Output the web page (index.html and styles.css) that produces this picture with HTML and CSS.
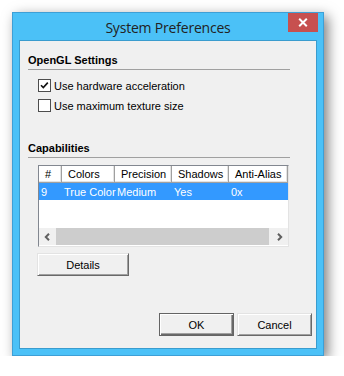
FILE: index.html
```html
<!DOCTYPE html>
<html>
<head>
<meta charset="utf-8">
<link rel="stylesheet" href="styles.css">
</head>
<body>
<div class="window">
  <div class="titlebar">
    <span class="spacer"></span>
    <div class="title">System Preferences</div>
    <div class="close">
      <svg width="10" height="9" viewBox="0 0 10 9"><path d="M1.2 0.8 L8.8 8.2 M8.8 0.8 L1.2 8.2" stroke="#fff" stroke-width="2" fill="none"/></svg>
    </div>
  </div>
  <div class="client">
    <div class="group-title">OpenGL Settings</div>
    <div class="checks">
      <label class="check"><span class="box"><svg width="11" height="11" viewBox="0 0 11 11"><path d="M2 5.2 L4.3 7.6 L8.8 2.6" stroke="#111" stroke-width="1.6" fill="none"/></svg></span>Use hardware acceleration</label>
      <label class="check"><span class="box"></span>Use maximum texture size</label>
    </div>
    <div class="group-title caps">Capabilities</div>
    <div class="listview">
      <div class="lv-header">
        <div class="hc c1">#</div>
        <div class="hc c2">Colors</div>
        <div class="hc c3">Precision</div>
        <div class="hc c4">Shadows</div>
        <div class="hc c5">Anti-Alias</div>
      </div>
      <div class="lv-row selected">
        <div class="rc c1">9</div>
        <div class="rc c2">True Color</div>
        <div class="rc c3">Medium</div>
        <div class="rc c4">Yes</div>
        <div class="rc c5">0x</div>
      </div>
      <div class="lv-empty"></div>
      <div class="hscroll">
        <div class="arrow"><svg width="7" height="8" viewBox="0 0 7 8"><path d="M5 0.8 L1.8 4 L5 7.2" stroke="#606060" stroke-width="2" fill="none"/></svg></div>
        <div class="thumb"></div>
        <div class="arrow"><svg width="7" height="8" viewBox="0 0 7 8"><path d="M2 0.8 L5.2 4 L2 7.2" stroke="#606060" stroke-width="2" fill="none"/></svg></div>
      </div>
    </div>
    <button class="btn details">Details</button>
    <div class="footer">
      <button class="btn default">OK</button>
      <button class="btn">Cancel</button>
    </div>
  </div>
</div>
</body>
</html>
```
FILE: styles.css
```css
html, body {
  margin: 0;
  padding: 0;
  background: #ffffff;
}
body {
  font-family: "Liberation Sans", Arial, sans-serif;
  font-size: 11px;
  color: #000;
}
.window {
  margin: 12px 0 0 12px;
  width: 312px;
  height: 344px;
  box-sizing: border-box;
  background: #4bc1f7;
  border: 1px solid #3d9fd6;
  box-shadow: 4px 4px 12px rgba(0, 0, 0, 0.5);
  display: flex;
  flex-direction: column;
}
.titlebar {
  height: 28px;
  display: grid;
  grid-template-columns: 1fr auto 1fr;
  align-items: center;
}
.title {
  font-family: "Open Sans", "Noto Sans", sans-serif;
  font-size: 14px;
  letter-spacing: -0.2px;
  color: #222;
  padding-top: 1px;
}
.close {
  justify-self: end;
  align-self: start;
  margin-right: 5px;
  width: 30px;
  height: 19px;
  background: #c7504f;
  display: flex;
  align-items: center;
  justify-content: center;
}
.close svg { display: block; }
.client {
  margin: 0 7px;
  height: 307px;
  background: #f0f0f0;
  box-shadow: 0 0 0 1px rgba(30, 90, 130, 0.35);
  display: flex;
  flex-direction: column;
  align-items: flex-start;
  padding: 0 4px 12px 0;
  box-sizing: border-box;
  width: 296px;
}
.group-title {
  align-self: stretch;
  margin: 12px 22px 0 8px;
  font-weight: bold;
  line-height: 14px;
  padding-bottom: 2px;
  border-bottom: 1px solid #a0a0a0;
}
.group-title.caps {
  margin-top: 29px;
}
.checks {
  margin: 9px 0 0 18px;
  display: flex;
  flex-direction: column;
  gap: 7px;
}
.check {
  display: flex;
  align-items: center;
  height: 13px;
  gap: 3px;
}
.box {
  width: 13px;
  height: 13px;
  box-sizing: border-box;
  border: 1px solid #4d4d4d;
  background: #fff;
  display: flex;
  align-items: center;
  justify-content: center;
}
.box svg { display: block; }
.listview {
  margin: 7px 0 0 18px;
  width: 251px;
  height: 82px;
  box-sizing: border-box;
  border: 1px solid;
  border-color: #828790 #e3e3e3 #e3e3e3 #828790;
  background: #fff;
  display: flex;
  flex-direction: column;
  padding-bottom: 1px;
}
.lv-header, .lv-row {
  display: grid;
  grid-template-columns: 23px 53px 57px 57px 59px;
}
.lv-header {
  height: 17px;
}
.hc {
  box-sizing: border-box;
  border-right: 1px solid #a0a0a0;
  border-bottom: 1px solid #a0a0a0;
  box-shadow: inset -1px -1px 0 #e3e3e3;
  padding-left: 6px;
  display: flex;
  align-items: center;
  white-space: nowrap;
}
.lv-row {
  height: 17px;
}
.lv-row.selected {
  background: #3399ff;
  color: #fff;
}
.rc {
  padding-left: 2px;
  display: flex;
  align-items: center;
  white-space: nowrap;
}
.lv-empty {
  flex: 1;
}
.hscroll {
  height: 17px;
  background: #f0f0f0;
  display: flex;
}
.arrow {
  width: 17px;
  display: flex;
  align-items: center;
  justify-content: center;
}
.arrow svg { display: block; }
.thumb {
  width: 213px;
  margin-right: 2px;
  background: #cdcdcd;
}
.btn {
  font-family: "Liberation Sans", Arial, sans-serif;
  font-size: 11px;
  color: #000;
  height: 23px;
  width: 75px;
  padding: 0;
  box-sizing: border-box;
  background: #f0f0f0;
  border: 1px solid;
  border-color: #e3e3e3 #696969 #696969 #e3e3e3;
  box-shadow: inset 1px 1px 0 #fff, inset -1px -1px 0 #a0a0a0;
}
.btn.details {
  width: 92px;
  margin: 6px 0 0 17px;
}
.btn.default {
  border-color: #646464;
  box-shadow: inset 1px 1px 0 #fff, inset -1px -1px 0 #696969, inset -2px -2px 0 #a0a0a0;
}
.footer {
  margin-top: auto;
  align-self: flex-end;
  display: flex;
  gap: 3px;
}
```
